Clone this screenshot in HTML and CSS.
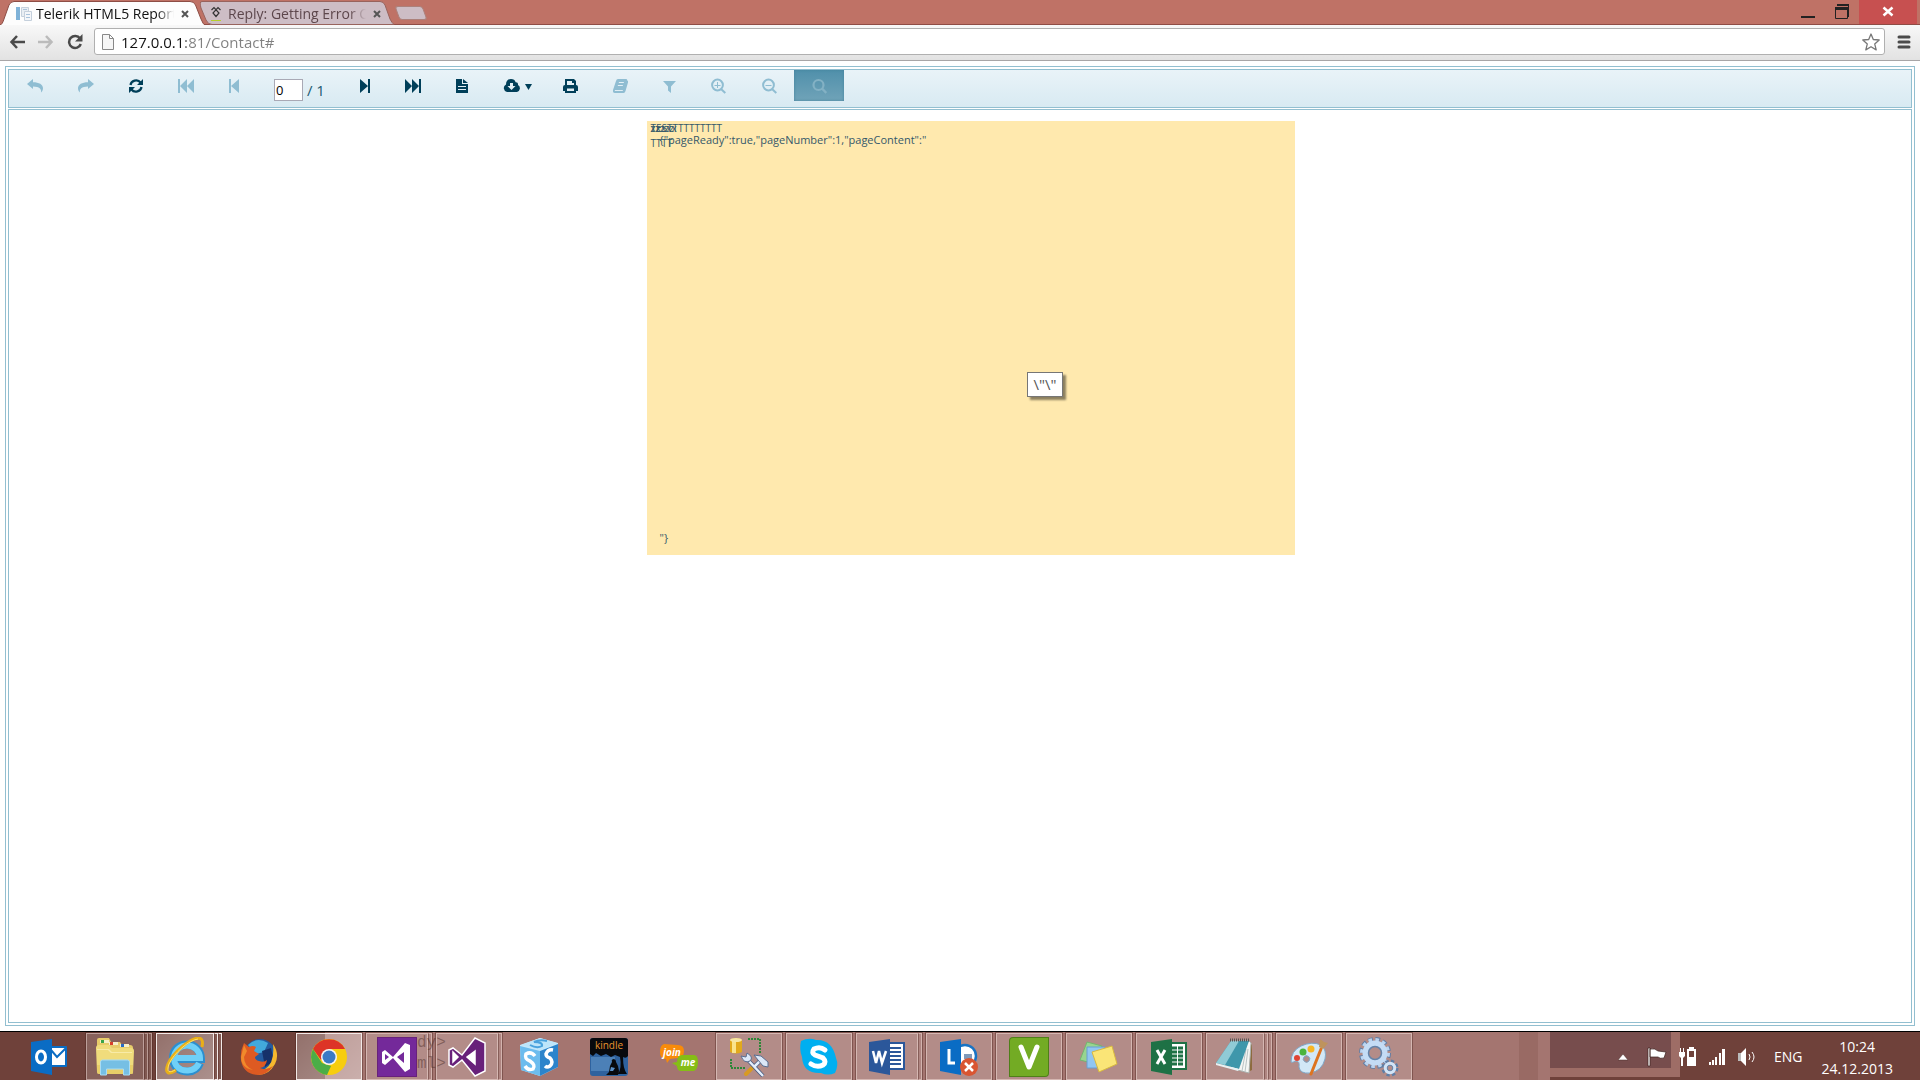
FILE: index.html
```html
<!DOCTYPE html>
<html lang="en">
<head>

	<meta charset="UTF-8">
	<title>Telerik HTML5 Report Viewer</title>

	<meta name="viewport" content="width=device-width, initial-scale=1">

	<link rel="stylesheet" href="styles.css">

</head>
<body>

	<header class="browser">

		<div class="tab-strip">

			<div class="tab tab-active">
				<svg class="tab-shape" viewBox="0 0 206 25" aria-hidden="true"><path d="M-1 25.500C2 25 3 22 4 19L9 5Q10.500 1.500 14 1.500H190Q194 1.500 195.500 5L201 19Q203 25 206 25.500" fill="#fdfdfd" stroke="#8d4d45"/></svg>
				<svg class="favicon" viewBox="0 0 16 16" aria-hidden="true"><path fill="#7fb2d8" d="M0 1h4v13H0z"/><path fill="#e9eef3" stroke="#c5d0dc" d="M5.500 1.500h7v9h-7z"/><path fill="#f4f6f9" stroke="#c5d0dc" d="M8.500 5.500h7v9h-7z"/><path stroke="#a9c3dc" d="M7 3.500h4M10 8.500h4M10 11.500h4"/></svg>
				<a href="#" class="tab-title">Telerik HTML5 Report Viewer</a>
				<button type="button" class="tab-close" aria-label="Close tab"><svg viewBox="0 0 8 8"><path d="M1 1l6 6M7 1l-6 6"/></svg></button>
			</div>

			<div class="tab tab-back">
				<svg class="tab-shape" viewBox="0 0 196 25" aria-hidden="true"><path d="M1 8L6 20Q8 24.500 12 24.500H194Q192 23 190 19L185 5Q183.500 1.500 180 1.500H2Q-1 1.500 1 8Z" fill="#cdbdc5" stroke="#98635d"/></svg>
				<svg class="favicon" viewBox="0 0 16 16" aria-hidden="true"><path fill="none" stroke="#333" stroke-width="1.200" d="M3.500 4L6 1.500 11 7 8 10.500 5 7l5-5.500L12.500 4"/><path fill="#b6cf2a" d="M3 14h10v1H3z"/></svg>
				<a href="#" class="tab-title">Reply: Getting Error Code</a>
				<button type="button" class="tab-close" aria-label="Close tab"><svg viewBox="0 0 8 8"><path d="M1 1l6 6M7 1l-6 6"/></svg></button>
			</div>

			<button type="button" class="new-tab" aria-label="New tab"></button>

			<div class="window-buttons">
				<button type="button" aria-label="Minimize"><svg viewBox="0 0 16 16"><path fill="#222" d="M1 12h14v2H1z"/></svg></button>
				<button type="button" aria-label="Restore"><svg viewBox="0 0 16 16"><path fill="none" stroke="#222" d="M1.500 3.500h12v11h-12zM3 1.500h11.500V13"/><path fill="#222" d="M1 3h13v3H1zM3 0h12v2H3z"/></svg></button>
				<button type="button" class="window-close" aria-label="Close"><svg viewBox="0 0 16 16"><path fill="none" stroke="#fff" stroke-width="2.500" d="M3.500 3.500l9 8M12.500 3.500l-9 8"/></svg></button>
			</div>

		</div>

		<div class="nav-bar">
			<button type="button" aria-label="Back"><svg viewBox="0 0 16 16"><path fill="none" stroke="#4a4a4a" stroke-width="2.500" d="M8 2L2.500 8 8 14M2.500 8H16"/></svg></button>
			<button type="button" aria-label="Forward"><svg viewBox="0 0 16 16"><path fill="none" stroke="#bbb" stroke-width="2.500" d="M8 2l5.500 6L8 14M13.500 8H0"/></svg></button>
			<button type="button" aria-label="Reload"><svg viewBox="0 0 16 16"><path fill="none" stroke="#4a4a4a" stroke-width="2.500" d="M13 4.500A6 6 0 1 0 13.800 10"/><path fill="#4a4a4a" d="M15.500 0v7.500H8z"/></svg></button>
			<div class="omnibox">
				<svg viewBox="0 0 12 16" aria-hidden="true"><path fill="#f6f6f6" stroke="#888" d="M.5.500h7l4 4v11H.500zM7.500.500v4h4"/></svg>
				<input type="text" class="address" value="127.0.0.1:81/Contact#" aria-label="Address">
				<button type="button" class="bookmark" aria-label="Bookmark"><svg viewBox="0 0 18 18"><path fill="#fff" stroke="#777" stroke-width="1.300" stroke-linejoin="round" d="M9 1l2.300 5.500 5.900.5-4.500 3.900 1.500 6L9 13.700 3.800 16.900l1.500-6L.8 7l5.900-.5z"/></svg></button>
			</div>
			<button type="button" class="menu" aria-label="Menu"><svg viewBox="0 0 14 14"><path stroke="#4a4a4a" stroke-width="3" stroke-linecap="round" d="M2 2h10M2 7h10M2 12h10"/></svg></button>
		</div>

	</header>

	<main class="viewer">

		<div class="viewer-toolbar">
			<button type="button" disabled aria-label="Navigate back"><svg width="16" height="16" viewBox="0 0 16 16"><path fill="currentColor" d="M0 6l6-5v3.200c6 0 10 2.300 10 6 0 1.800-.8 3.200-2 4.300.8-3.200-1.500-6-8-6V11z"/></svg></button>
			<button type="button" disabled aria-label="Navigate forward"><svg width="16" height="16" viewBox="0 0 16 16"><path fill="currentColor" d="M16 6l-6-5v3.200c-6 0-10 2.300-10 6 0 1.800.8 3.200 2 4.300-.8-3.200 1.500-6 8-6V11z"/></svg></button>
			<button type="button" aria-label="Refresh"><svg width="14" height="16" viewBox="0 0 14 16"><path fill="none" stroke="currentColor" stroke-width="2.200" d="M1.500 7C2 2.800 8.500.5 11.500 4.500M12.500 9C12 13.200 5.500 15.500 2.500 11.500"/><path fill="currentColor" d="M14 1v6H8zM0 15V9h6z"/></svg></button>
			<button type="button" disabled aria-label="First page"><svg width="16" height="16" viewBox="0 0 16 16"><path fill="currentColor" d="M0 1h2v14H0zM9 1v14L2 8zM16 1v14L9 8z"/></svg></button>
			<button type="button" disabled aria-label="Previous page"><svg width="10" height="16" viewBox="0 0 10 16"><path fill="currentColor" d="M0 1h2v14H0zM10 1v14L2 8z"/></svg></button>
			<label class="pager"><input type="text" value="0" aria-label="Page number"> / 1</label>
			<button type="button" aria-label="Next page"><svg width="10" height="16" viewBox="0 0 10 16"><path fill="currentColor" d="M8 1h2v14H8zM0 1v14l8-7z"/></svg></button>
			<button type="button" aria-label="Last page"><svg width="16" height="16" viewBox="0 0 16 16"><path fill="currentColor" d="M14 1h2v14h-2zM0 1v14l7-7zM7 1v14l7-7z"/></svg></button>
			<button type="button" aria-label="Print preview"><svg width="12" height="16" viewBox="0 0 12 16"><path fill="currentColor" fill-rule="evenodd" d="M0 1h6v5h6v9H0zM7 1l5 4H7zM2 8v1h8V8zM2 11v1h8v-1z"/></svg></button>
			<button type="button" class="export" aria-label="Export"><svg width="29" height="16" viewBox="0 0 29 16"><path fill="currentColor" fill-rule="evenodd" d="M4 14a4 4 0 0 1-1-7.500C3 3 5 1 8 1c2.500 0 4 1.200 4.600 3.200 1.700-.2 2.700 1 2.400 2.800A3.800 3.800 0 0 1 14 14zM7 5v3H4.500L8.500 12l4-4H10V5z"/><path fill="currentColor" d="M22 6h7l-3.500 6z"/></svg></button>
			<button type="button" aria-label="Print"><svg width="15" height="16" viewBox="0 0 15 16"><path fill="currentColor" fill-rule="evenodd" d="M2 7V1h9l2 2v4q2 0 2 2v4h-2v2H2v-2H0V9q0-2 2-2zM4 3v4h7V5H9V3zM4 10.500V13h7v-2.500z"/></svg></button>
			<button type="button" disabled aria-label="Document map"><svg width="15" height="16" viewBox="0 0 15 16"><path fill="currentColor" fill-rule="evenodd" d="M5 1h8q1.500 0 1 1.500h.500q1 .5.500 2L12.500 13q-.5 2-2 2H2q-2.500 0-2-3L3 3q.5-2 2-2zM6 4l-.3 1h5L11 4zM5 7l-.3 1h5L10 7zM2 12l-.3 1h8l.3-1z"/></svg></button>
			<button type="button" disabled aria-label="Parameters"><svg width="13" height="16" viewBox="0 0 13 16"><path fill="currentColor" d="M0 3h13L8 8.500V15l-3-2.500v-4z"/></svg></button>
			<button type="button" disabled aria-label="Zoom in"><svg width="15" height="16" viewBox="0 0 15 16"><path fill="none" stroke="currentColor" stroke-width="2" d="M10 11l4.300 4"/><circle cx="6.500" cy="7" r="5.400" fill="none" stroke="currentColor" stroke-width="2"/><path stroke="currentColor" d="M3.500 7.500h6M6.500 4v6"/></svg></button>
			<button type="button" disabled aria-label="Zoom out"><svg width="16" height="16" viewBox="0 0 16 16"><path fill="none" stroke="currentColor" stroke-width="2" d="M11 11l4.300 4"/><circle cx="7.500" cy="7" r="5.400" fill="none" stroke="currentColor" stroke-width="2"/><path stroke="currentColor" d="M4.500 7.500h6"/></svg></button>
			<button type="button" disabled class="selected" aria-label="Toggle full page"><svg width="15" height="16" viewBox="0 0 15 16"><path fill="none" stroke="currentColor" stroke-width="2.500" d="M10 10.500l4.300 4.500"/><circle cx="6.500" cy="7" r="5" fill="none" stroke="currentColor" stroke-width="2.200"/></svg></button>
		</div>

		<div class="pages-area">
			<div class="report-page">
				<div class="cell">TESTTTTTTTTTT</div>
				<div class="cell">zzzzz</div>
				<div class="cell">xxxxx</div>
				<div class="cell cell-second">TTTT</div>
				<p>{"pageReady":true,"pageNumber":1,"pageContent":"</p>
				<p class="page-end">"}</p>
				<div class="tooltip" role="tooltip">\"\"</div>
			</div>
		</div>

	</main>

	<footer class="taskbar">

		<span class="ghost">dy&gt;<br>ml&gt;</span>

		<nav class="tasks">
			<button type="button" class="task pinned" aria-label="Outlook"><span class="face"><svg viewBox="0 0 40 40">
				<path fill="#0a6cc4" d="M22 9h15q1 0 1 1v19q0 1-1 1H22z"/><path fill="#fff" d="M22 11h14v17H22z"/><path fill="none" stroke="#0a6cc4" stroke-width="2" d="M22 13l6 7 9-9"/><path fill="#0a6cc4" d="M2 5l21-3v36L2 34z"/><ellipse cx="12" cy="20" rx="4.500" ry="6" fill="none" stroke="#fff" stroke-width="3"/></svg></span></button>
			<button type="button" class="task" aria-label="File Explorer"><span class="face"><svg viewBox="0 0 40 40">
				<path fill="#e7cc6a" d="M2 8V3q0-2 2-2h10l2 4h9l2 3h8q3 0 3 3v24H2z"/><path fill="#f6efc8" d="M5 3h9v3H5zM14 5h9v3h-9zM25 7h9v3h-9z"/><path fill="#38a548" d="M6 3h3v3H6z"/><path fill="#d8402c" d="M15 5h3v3h-3z"/><path fill="#276bc5" d="M26 7h3v3h-3z"/><path fill="#f0dc7c" d="M1 11q0-3 3-3h10l3 3h19q3 0 3 3l-1 22q0 1-2 1H4q-2 0-2-2z"/><path fill="#f8eba8" d="M2 12h12l3 3h20v1H16l-3-3H2z"/><path fill="#e2c45c" d="M2 28h36v8q0 1-2 1H4q-2 0-2-2z" opacity=".6"/><path fill="#76bfe4" stroke="#a9dcf3" d="M5.500 38V25q0-2 2-2h25q2 0 2 2v13h-6v-6h-17v6z"/></svg></span><i></i><i></i></button>
			<button type="button" class="task bright" aria-label="Internet Explorer"><span class="face"><svg viewBox="0 0 40 40">
				<path fill="none" stroke="#2b8fd0" stroke-width="8" d="M35 26q-3 8-12 8.500C14 35 8 29 8 21S14 7.500 22 7.500 36 14 36 22H10"/><path fill="none" stroke="#6fd0f8" stroke-width="6" d="M34 26q-3 7-11 7.500C14 34 9 28 9 21S15 8.500 22 8.500 35 14 35 21H11"/><path fill="none" stroke="#e9af17" stroke-width="3" d="M11 33C4 38-1 37 3 27 8 16 24 2 33 1q6 0 4 9"/><path fill="none" stroke="#ffe46a" stroke-width="1" d="M10 33C5 36 1 36 4 27 9 16 24 3 33 2"/></svg></span><i></i><i></i></button>
			<button type="button" class="task pinned" aria-label="Firefox"><span class="face"><svg viewBox="0 0 40 40">
				<circle cx="21" cy="18" r="16" fill="#245b9f"/><path fill="#42a9dc" d="M9 8Q18-1 29 6l-4 9-8 2z"/><path fill="#16316a" d="M23 14l9-3 3 13-9 6z"/><path fill="#f5b82e" d="M34 7q7 10 2 20-6 11-17 11l7-6q10-6 8-25z"/><path fill="#de5a22" d="M5 6l5 4q4-2 7 0l-2 4 5 3-4 3q0 3 4 4 5 2 8-1-1 7-7 8 6 3 13-2-6 9-15 9Q4 37 2 23 1 14 5 6z"/><path fill="#f18a2b" d="M5 8l3 6-3 6q0 9 9 13Q2 31 2 20z"/></svg></span></button>
			<button type="button" class="task bright" aria-label="Chrome"><span class="face"><svg viewBox="0 0 40 40">
				<circle cx="20" cy="20" r="18" fill="#f7cd0e"/><path fill="#dd3427" d="M4 12A18 18 0 0 1 36 12H20L12 23z"/><path fill="#4bad47" d="M4 12l9 14 9 3-4 9A18 18 0 0 1 4 12z"/><circle cx="20" cy="20" r="8" fill="#f5f5f5"/><circle cx="20" cy="20" r="6.500" fill="#3a7ac5"/></svg></span></button>
			<button type="button" class="task" aria-label="Visual Studio"><span class="face"><svg viewBox="0 0 40 40">
				<path fill="#68217a" d="M0 0h40v40H0z"/><path fill="#74299a" d="M1 1h38v38H1z"/><path fill="#fff" fill-rule="evenodd" d="M5 15l3-2 8 7L28 6l5 2v24l-5 3-12-14-8 7-3-2zM8 17v6l4-3zM27 15l-7 5 7 6z"/></svg></span><i></i></button>
			<button type="button" class="task" aria-label="Blend"><span class="face"><svg viewBox="0 0 40 40">
				<path fill="#68217a" stroke="#fff" stroke-width="1.500" fill-rule="evenodd" d="M2 13l4-2 9 7L28 1l10 5v28l-10 5-13-16-9 7-4-2zM6 15v10l5-5zM28 14l-8 6 8 7z"/><path fill="#fff" d="M6 15v10l5-5zM28 14l-8 6 8 7z"/></svg></span><i></i></button>
			<button type="button" class="task pinned" aria-label="SharePoint Tools"><span class="face"><svg viewBox="0 0 40 40">
				<path fill="#c5e8fb" d="M1 8L21 1l18 5v24L21 39 2 33z"/><path fill="#6cbcee" d="M1 9l20 5v25L2 33z"/><path fill="#2c84cb" d="M21 14l18-7v23l-18 9z"/><path fill="#bde5fa" d="M2 8l19-7 17 5-17 7z"/><path fill="none" stroke="#4aa3de" stroke-width="2" d="M28 4q-7-2-13 1 9 0 8 4-5 3-12-1"/><path fill="none" stroke="#fff" stroke-width="3.500" d="M16 19q-4-5-9-2-2 5 4 7 6 4 3 8-5 2-8-3M34 13q-5-1-7 4 0 3 4 4 4 4 0 8-3 2-5 0"/></svg></span></button>
			<button type="button" class="task pinned" aria-label="Kindle"><span class="face"><svg viewBox="0 0 40 40">
				<rect x="1" y="1" width="38" height="38" rx="3" fill="#2f629e"/><path fill="#6a9dd0" d="M2 20h24v14H2z" opacity=".5"/><path fill="#07090d" d="M1 4q0-3 3-3h32q3 0 3 3v15q-2 3-5 1 0 12 4 17H29q4-6 2-17l-5-2-4 2-5-3-5 2-5-3-3 3-3-2zM17 38l3-3 1-6 2-4q-1-2 1-3 3 0 3 3l2 4 1 5-1 4z"/><path fill="#5a8fc6" d="M22 30l4 1-2 3h-3z"/><text x="20" y="12" text-anchor="middle" class="kindle-text">kindle</text></svg></span></button>
			<button type="button" class="task pinned" aria-label="join.me"><span class="face"><svg viewBox="0 0 40 40">
				<path fill="#f88b0a" d="M5 7l14 1q6 0 6 6t-6 7l-8 1-3 4-1-4q-6 0-6-7t4-8z"/><path fill="#85bd16" d="M23 18h12q4 0 4 7t-4 9H22q-4 0-4-5l-5-3 5-1q0-7 5-7z"/><text x="13" y="19" text-anchor="middle" class="join-text">join</text><text x="29" y="29" text-anchor="middle" class="join-text">me</text></svg></span></button>
			<button type="button" class="task" aria-label="SQL Tools"><span class="face"><svg viewBox="0 0 40 40">
				<path fill="#e2a91b" d="M1 3q6-4 12 0v12q-6 3-12 0z"/><path fill="#fae48a" d="M3 4h4v12H3z"/><ellipse cx="7" cy="3" rx="6" ry="2" fill="#f6e6a3"/><path fill="none" stroke="#2c8737" stroke-width="2" stroke-dasharray="2 1" d="M19 2h12v14M2 22v9h15"/><path stroke="#d89a22" stroke-width="4" stroke-linecap="round" d="M17 37l8-8"/><path stroke="#475b80" stroke-width="4" d="M18 22l16 17M24 31l9-9"/><path stroke="#e3edfa" stroke-width="2.500" d="M18 22l16 17M25 30l8-8"/><path fill="#dce8f8" stroke="#596e91" d="M12 19l5 1 1-4q7 4 3 8-6 3-9-5zM25 18l7 1 7 6v5l-5-1-5-6z"/></svg></span></button>
			<button type="button" class="task" aria-label="Skype"><span class="face"><svg viewBox="0 0 40 40">
				<path fill="#00aff0" d="M2 4q8-4 15-1 16-1 20 18 3 7-1 15-7 3-14 0Q4 37 3 20 0 12 2 4z"/><path fill="none" stroke="#fff" stroke-width="5" stroke-linecap="round" d="M26 13q-5-4-11-1-3 4 1 6l8 3q4 4 0 7-6 3-12-1"/></svg></span></button>
			<button type="button" class="task" aria-label="Word"><span class="face"><svg viewBox="0 0 40 40">
				<path fill="#fff" stroke="#2b579a" stroke-width="2" d="M22 6h15v26H22z"/><path stroke="#2b579a" stroke-width="2" d="M23 11h11M23 15h11M23 19h11M23 23h11M23 27h11"/><path fill="#2b579a" d="M2 5l21-3v36L2 34z"/><path fill="none" stroke="#fff" stroke-width="2.500" d="M6 14l3 12 3-12 3 12 4-12"/></svg></span><i></i></button>
			<button type="button" class="task" aria-label="Lync"><span class="face"><svg viewBox="0 0 40 40">
				<circle cx="26" cy="19" r="11" fill="#fff" stroke="#1874c5" stroke-width="2.500"/><path fill="#0a6cc4" d="M1 5l21-3v36L1 34z"/><path fill="none" stroke="#fff" stroke-width="3" d="M10 12v14h6"/><path fill="#7f9aba" d="M25 17h8v5h-8z"/><circle cx="30" cy="30" r="9" fill="#d95532"/><path stroke="#fff" stroke-width="2.500" d="M26 26l8 8M34 26l-8 8"/></svg></span></button>
			<button type="button" class="task" aria-label="Camtasia"><span class="face"><svg viewBox="0 0 40 40">
				<path fill="#4f7f18" d="M4 0h36v36q0 4-4 4H0V4q0-4 4-4z"/><path fill="#73ab24" d="M4 1h35v35q0 3-3 3H1V4q0-3 3-3z"/><path fill="none" stroke="#fff" stroke-width="5" stroke-linecap="round" stroke-linejoin="round" d="M12 10l8 20 8-20"/></svg></span></button>
			<button type="button" class="task" aria-label="Sticky Notes"><span class="face"><svg viewBox="0 0 40 40">
				<path fill="#98d58f" stroke="#74b56f" d="M8 5l15 4-6 18-16-4z"/><path fill="#91c6f1" stroke="#699ed0" d="M8 10h18v21H8z"/><path fill="#fae577" stroke="#d7b840" d="M13 15l20-6 5 18-18 8z"/></svg></span></button>
			<button type="button" class="task" aria-label="Excel"><span class="face"><svg viewBox="0 0 40 40">
				<path fill="#fff" stroke="#1e7145" stroke-width="2" d="M22 6h15v26H22z"/><path stroke="#1e7145" stroke-width="3" stroke-dasharray="5 1" d="M23 11h12M23 15h12M23 19h12M23 23h12M23 27h12"/><path fill="#1e7145" d="M2 5l21-3v36L2 34z"/><path fill="none" stroke="#fff" stroke-width="3" d="M8 13l8 14M16 13L8 27"/></svg></span></button>
			<button type="button" class="task" aria-label="Notepad"><span class="face"><svg viewBox="0 0 40 40">
				<path fill="#8c6b3e" d="M34 5l3 3v25l-4 2z"/><path fill="#f5f6f4" stroke="#aab1ae" d="M16 4h18l2 2-2 30-19-5z"/><path stroke="#b9c3c4" d="M31 12l-4 22M33 12l-3 23"/><path fill="#3f97ab" d="M16 4h18L24 32 1 26z"/><path fill="#90cbd6" d="M16 4h8L10 28 1 26z"/><path fill="#e8f1f2" d="M1 26l23 6-1 2-22-6z"/><path stroke="#555" stroke-width="3" stroke-dasharray="1 1" d="M15 3h19"/></svg></span><i></i><i></i></button>
			<button type="button" class="task" aria-label="Paint"><span class="face"><svg viewBox="0 0 40 40">
				<path fill="#d2e8f7" stroke="#7fa8c8" fill-rule="evenodd" d="M2 25q0-11 10-16 11-5 20-1 6 5 4 14-3 12-15 14-10 1-11-6 1-6-3-6-4 2-5 1zM15 20a3 3 0 1 0 5 4 3 3 0 0 0-5-4z"/><circle cx="8" cy="21" r="3" fill="#e04434"/><circle cx="14" cy="15" r="3.500" fill="#4bb43d"/><circle cx="22" cy="12" r="3.500" fill="#f7b626"/><path stroke="#dd7421" stroke-width="3" stroke-linecap="round" d="M22 37l10-25"/><path fill="#be935d" d="M30 10l1-8 4 3 4 1-5 6z"/></svg></span></button>
			<button type="button" class="task" aria-label="Services"><span class="face"><svg viewBox="0 0 40 40">
				<circle cx="16" cy="16" r="13.500" fill="none" stroke="#5f7ea6" stroke-width="5" stroke-dasharray="4.500 2.570"/><circle cx="16" cy="16" r="13" fill="none" stroke="#bcd4ef" stroke-width="4" stroke-dasharray="3.500 3.307"/><circle cx="16" cy="16" r="9.500" fill="none" stroke="#c4dcf5" stroke-width="6"/><circle cx="16" cy="16" r="6.500" fill="none" stroke="#6483a8" stroke-width="1.500"/><circle cx="31" cy="31" r="6.500" fill="none" stroke="#5f7ea6" stroke-width="4" stroke-dasharray="3 2.105"/><circle cx="31" cy="31" r="4.500" fill="none" stroke="#d2e4f6" stroke-width="3.500"/><circle cx="31" cy="31" r="2.800" fill="none" stroke="#6483a8"/></svg></span></button>
		</nav>

		<div class="tray">
			<button type="button" aria-label="Show hidden icons"><svg width="10" height="20" viewBox="0 0 10 20"><path fill="#fff" stroke="#4a2c28" stroke-width=".5" d="M0 13l5-6 5 6z"/></svg></button>
			<button type="button" aria-label="Action Center"><svg width="20" height="20" viewBox="0 0 20 20"><path fill="#fff" stroke="#3b211e" stroke-width=".7" d="M1 1h2v18H1zM3 2q5-1 8 2l8 1-2 6q-4 1-6-1H3z"/></svg></button>
			<button type="button" aria-label="Battery"><svg width="18" height="20" viewBox="0 0 18 20"><path fill="none" stroke="#fff" stroke-width="2" d="M9 3h7v15H9z"/><path fill="#fff" d="M10 0h5v2h-5zM10 10h5v7h-5zM0 5h6v4L4 11v8H2v-8L0 9zM1 1h1v4H1zM4 1h1v4H4z"/></svg></button>
			<button type="button" aria-label="Network"><svg width="16" height="20" viewBox="0 0 16 20"><path fill="#fff" d="M0 15h2v3H0zM3 13h2v5H3zM6 10h2v8H6zM10 6h2v12h-2zM13 2h3v16h-3z"/></svg></button>
			<button type="button" aria-label="Volume"><svg width="20" height="20" viewBox="0 0 20 20"><path fill="#fff" d="M1 6h3l5-5v18l-5-5H1z"/><path fill="#bbb" d="M1 6h3v8H1z"/><path fill="none" stroke="#fff" d="M12 7q2 3 0 6M15 5q4 5 0 10"/></svg></button>
			<span class="lang">ENG</span>
			<time class="clock" datetime="2013-12-24T10:24">10:24<br>24.12.2013</time>
		</div>

	</footer>

</body>
</html>
```

FILE: styles.css
```css
html {
	box-sizing: border-box;
	height: 100%;
}

*,
*:before,
*:after {
	box-sizing: inherit;
}

body {
	display: flex;
	flex-direction: column;
	height: 100%;
	margin: 0;
	background: #fff;
	font: 15px/20px "Open Sans", "Noto Sans", sans-serif;
	overflow: hidden;
}

button {
	display: flex;
	align-items: center;
	justify-content: center;
	margin: 0;
	padding: 0;
	border: 0;
	background: none;
	font: inherit;
}

svg {
	display: block;
	flex: none;
}

/* Browser window */

.tab-strip {
	display: flex;
	height: 25px;
	background: #bf7266;
	border-bottom: 1px solid #8f4c45;
}

.tab {
	position: relative;
	display: flex;
	align-items: center;
	height: 25px;
	flex: none;
}

.tab-active {
	z-index: 1;
	width: 206px;
	padding: 3px 15px 0 16px;
}

.tab-back {
	width: 196px;
	margin-left: -6px;
	padding: 3px 13px 0 8px;
}

.tab-shape {
	position: absolute;
	inset: 0;
	width: 100%;
	height: 100%;
}

.favicon {
	position: relative;
	width: 16px;
	height: 16px;
}

.tab-title {
	position: relative;
	flex: 1;
	margin: 0 5px 0 4px;
	overflow: hidden;
	white-space: nowrap;
	font-size: 14px;
	color: #111;
	text-decoration: none;
	-webkit-mask-image: linear-gradient(90deg, #000 88%, transparent);
	mask-image: linear-gradient(90deg, #000 88%, transparent);
}

.tab-back .tab-title {
	color: #5d474c;
}

.tab-close {
	position: relative;
	width: 12px;
	height: 16px;
}

.tab-close svg {
	width: 8px;
	height: 8px;
	stroke: #555;
	stroke-width: 2;
}

.new-tab {
	width: 28px;
	height: 14px;
	margin: 6px 0 0 1px;
	border: 1px solid #ac817b;
	border-radius: 3px;
	background: #cdbdc5;
	transform: skewX(20deg);
}

.window-buttons {
	display: flex;
	height: 24px;
	margin-left: auto;
	padding-right: 3px;
}

.window-buttons button {
	width: 34px;
}

.window-buttons svg {
	width: 16px;
	height: 16px;
}

.window-buttons .window-close {
	width: 58px;
	background: #c75050;
}

.nav-bar {
	display: flex;
	align-items: center;
	height: 36px;
	padding: 0 8px 2px;
	border-bottom: 1px solid #a8a6a7;
	background: linear-gradient(#f8f8f8, #e2e2e2);
}

.nav-bar button {
	width: 17px;
	height: 24px;
	margin-right: 12px;
}

.nav-bar svg {
	width: 16px;
	height: 16px;
}

.omnibox {
	display: flex;
	flex: 1;
	align-items: center;
	height: 27px;
	margin-left: -1px;
	padding: 0 3px 0 7px;
	border: 1px solid #b0b0b0;
	border-radius: 3px;
	background: #fff;
}

.omnibox > svg {
	width: 12px;
}

.address {
	flex: 1;
	min-width: 0;
	height: 24px;
	margin-left: 7px;
	padding: 0;
	border: 0;
	font: 15px/24px "Open Sans", "Noto Sans", sans-serif;
	/* host is darker than the port and path */
	color: transparent;
	background: linear-gradient(90deg, #111 65px, #808080 65px);
	-webkit-background-clip: text;
	background-clip: text;
}

.nav-bar .bookmark {
	width: 20px;
	margin: 0;
}

.bookmark svg {
	width: 18px;
	height: 18px;
}

.nav-bar .menu {
	width: 16px;
	margin: 0 0 0 11px;
}

.menu svg {
	width: 14px;
	height: 14px;
}

/* Report viewer */

.viewer {
	display: flex;
	flex: 1;
	flex-direction: column;
	gap: 1px;
	min-height: 0;
	margin: 5px;
	padding: 2px;
	border: 1px solid #92bfd0;
}

.viewer-toolbar {
	display: flex;
	align-items: flex-start;
	height: 39px;
	flex: none;
	border: 1px solid #92bfd0;
	background: linear-gradient(#e9f3f8, #d8eaf2);
	color: #003f59;
}

.viewer-toolbar button {
	height: 31px;
	padding: 0 17px 0 18px;
	color: inherit;
}

.viewer-toolbar .export {
	padding-right: 13px;
}

.viewer-toolbar button:disabled {
	color: #8fbdd2;
}

.viewer-toolbar .selected {
	background: linear-gradient(#5090ab, #70a3b8);
	box-shadow: inset 0 0 3px #46829c;
}

.viewer-toolbar .selected:disabled {
	color: #83b1c4;
}

.pager {
	display: flex;
	align-items: center;
	width: 86px;
	padding: 9px 0 0 18px;
	color: #1b5871;
	white-space: pre;
}

.pager input {
	width: 29px;
	height: 22px;
	padding: 0 1px;
	border: 1px solid #a9a9b5;
	background: #fff;
	font: 13px/20px "Open Sans", "Noto Sans", sans-serif;
}

.pages-area {
	flex: 1;
	min-height: 0;
	padding: 11px 0 0 21px;
	border: 1px solid #92bfd0;
}

.report-page {
	position: relative;
	width: 648px;
	height: 434px;
	margin: 0 auto;
	padding: 11px 13px;
	background: #ffe9ae;
	color: #35586a;
	font-size: 11px;
	line-height: 15px;
}

.report-page p {
	margin: 0;
}

.report-page .page-end {
	margin-top: 383px;
}

/* report cells are stacked in the corner of the page */
.cell {
	position: absolute;
	top: 0;
	left: 4px;
	font-size: 10px;
}

.cell-second {
	top: 15px;
}

.tooltip {
	position: absolute;
	top: 251px;
	left: 380px;
	padding: 1px 6px 2px;
	border: 1px solid #767676;
	background: #fff;
	box-shadow: 3px 3px 2px rgba(0, 0, 0, .45);
	color: #575757;
	font-size: 15px;
	line-height: 20px;
}

/* Taskbar */

.taskbar {
	position: relative;
	display: flex;
	justify-content: space-between;
	flex: none;
	height: 49px;
	border-top: 1px solid #000;
	background: linear-gradient(90deg, #6f413a 325px, #a47570 325px, #a47570 1519px, #996a64 1519px, #996a64 1538px, #a47570 1538px);
}

.ghost {
	position: absolute;
	z-index: 1;
	top: 1px;
	left: 417px;
	color: rgba(70, 40, 35, .45);
	font: 16px/21px "Liberation Mono", monospace;
}

.tasks {
	display: flex;
	gap: 4px;
	padding: 1px 0 0 16px;
}

.task {
	display: flex;
	width: 66px;
	height: 47px;
	align-items: stretch;
	box-shadow: 0 0 0 1px rgba(75, 35, 30, .4);
}

.task.pinned {
	box-shadow: none;
}

.face {
	display: flex;
	flex: 1;
	align-items: center;
	justify-content: center;
	border: 1px solid rgba(255, 235, 230, .45);
	background: rgba(255, 255, 255, .17);
}

.bright .face {
	border-color: #f2e8e6;
	background: linear-gradient(135deg, rgba(255, 255, 255, .25), rgba(255, 255, 255, .42));
}

.pinned .face {
	border-color: transparent;
	background: none;
}

.face svg {
	width: 40px;
	height: 40px;
}

.task i {
	width: 4px;
	border: 1px solid rgba(255, 235, 230, .45);
	border-left-color: rgba(75, 35, 30, .4);
	background: rgba(255, 255, 255, .12);
}

.bright i {
	border-color: #f2e8e6;
	border-left-color: #6f413a;
}

.kindle-text {
	fill: #e9942e;
	font: 10px "Open Sans", sans-serif;
}

.join-text {
	fill: #fff;
	font: italic bold 10px "Open Sans", sans-serif;
}

.tray {
	display: flex;
	align-items: center;
	width: 370px;
	padding: 0 0 0 68px;
	background: linear-gradient(#774d4d, #774d4d) 0 0 / 121px 36px no-repeat, linear-gradient(#9e6d66, #9e6d66) 0 0 / 130px 45px no-repeat, #6f413a;
	color: #fff;
}

.tray button {
	margin-right: 12px;
	padding-top: 2px;
}

.tray button:first-child {
	margin-right: 19px;
}

.lang {
	margin: 0 19px 0 5px;
	padding-top: 2px;
	font-size: 14px;
}

.clock {
	padding-top: 3px;
	font-size: 14px;
	line-height: 22px;
	text-align: center;
}
```
